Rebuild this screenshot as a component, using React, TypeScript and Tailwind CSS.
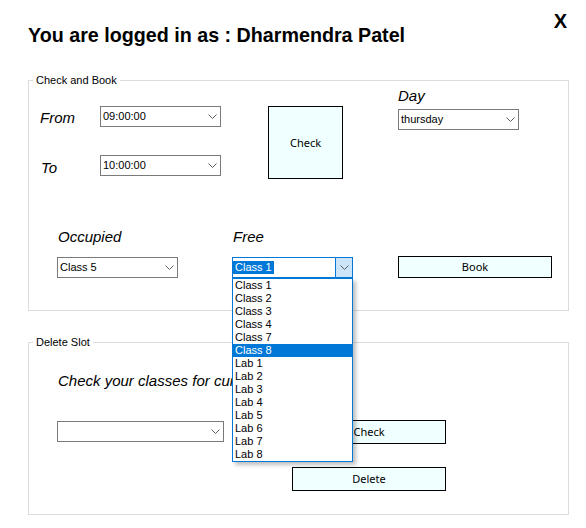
import React from 'react';

const Chevron: React.FC = () => (
  <svg width="9" height="5" viewBox="0 0 9 5" className="shrink-0">
    <polyline points="0.5,0.5 4.5,4.5 8.5,0.5" fill="none" stroke="#5f5f5f" strokeWidth="1" />
  </svg>
);

const Combo: React.FC<{ value?: string; className?: string }> = ({ value = '', className = 'w-[121px]' }) => (
  <div className={`flex h-[21px] items-center justify-between border border-[#7a7a7a] bg-white pl-[2px] pr-[3px] text-[11px] leading-[13px] ${className}`}>
    <span>{value}</span>
    <Chevron />
  </div>
);

const Button: React.FC<{ label: string; className: string }> = ({ label, className }) => (
  <button className={`flex items-center justify-center border border-black bg-[#f0ffff] font-['Noto_Sans',sans-serif] text-[11px] leading-[14px] text-black ${className}`}>
    {label}
  </button>
);

const Label: React.FC<{ text: string; className?: string }> = ({ text, className = '' }) => (
  <div className={`text-[15px] italic leading-[18px] ${className}`}>{text}</div>
);

const rooms = ['Class 1', 'Class 2', 'Class 3', 'Class 4', 'Class 7', 'Class 8', 'Lab 1', 'Lab 2', 'Lab 3', 'Lab 4', 'Lab 5', 'Lab 6', 'Lab 7', 'Lab 8'];

// open dropdown of the "Free" combo, drawn over the Delete Slot group
const FreeCombo: React.FC = () => (
  <div className="relative w-[121px]">
    <div className="flex h-[21px] border border-[#0078d7] bg-white text-[11px] leading-[13px]">
      <div className="flex flex-1 items-center">
        <span className="bg-[#0078d7] px-[2px] text-white">Class 1</span>
      </div>
      <div className="flex w-[17px] items-center justify-center border-l border-[#0078d7] bg-[#cce4f7]">
        <Chevron />
      </div>
    </div>
    <div className="absolute left-0 top-[21px] z-10 w-[121px] border border-[#0078d7] bg-white shadow-[3px_3px_4px_rgba(0,0,0,0.25)]">
      {rooms.map((room) => (
        <div
          key={room}
          className={`h-[13px] pl-[2px] text-[11px] leading-[13px] ${room === 'Class 8' ? 'bg-[#0078d7] text-white' : 'text-black'}`}
        >
          {room}
        </div>
      ))}
    </div>
  </div>
);

const GroupBox: React.FC<{ title: string; className: string; children: React.ReactNode }> = ({ title, className, children }) => (
  <div className={`relative mx-[28px] w-[541px] border border-[#dcdcdc] ${className}`}>
    <span className="absolute left-[4px] top-[-7px] bg-white px-[3px] text-[11px] leading-[13px]">{title}</span>
    {children}
  </div>
);

export default function App() {
  return (
    <div className="h-[528px] w-[586px] overflow-hidden bg-white font-['Liberation_Sans',Arial,sans-serif] text-black">
      <div className="flex justify-between pl-[28px] pr-[19px] pt-[9px]">
        <h1 className="mt-[14px] text-[19.7px] font-bold leading-[24px]">You are logged in as : Dharmendra Patel</h1>
        <span className="text-[20px] font-bold leading-[24px]">X</span>
      </div>

      <GroupBox title="Check and Book" className="mt-[33px] h-[231px]">
        <div className="flex items-start pt-[6px]">
          <div className="ml-[11px] mt-[19px] flex flex-col gap-[28px]">
            <div className="flex items-start">
              <Label text="From" className="mt-[3px] w-[60px]" />
              <Combo value="09:00:00" />
            </div>
            <div className="flex items-start">
              <Label text="To" className="mt-[4px] w-[60px] pl-[1px]" />
              <Combo value="10:00:00" />
            </div>
          </div>
          <Button label="Check" className="ml-[47px] mt-[19px] h-[73px] w-[75px]" />
          <div className="ml-[55px] flex flex-col gap-[4px]">
            <Label text="Day" />
            <Combo value="thursday" />
          </div>
        </div>

        <div className="mt-[49px] flex items-end">
          <div className="ml-[28px] flex flex-col gap-[11px]">
            <Label text="Occupied" className="pl-[1px]" />
            <Combo value="Class 5" />
          </div>
          <div className="ml-[54px] flex flex-col gap-[11px]">
            <Label text="Free" className="pl-[1px]" />
            <FreeCombo />
          </div>
          <Button label="Book" className="ml-[45px] h-[22px] w-[154px]" />
        </div>
      </GroupBox>

      <GroupBox title="Delete Slot" className="mt-[31px] h-[173px]">
        <div className="pl-[28px] pt-[29px]">
          <Label text="Check your classes for current day" className="pl-[1px]" />
          <div className="mt-[30px] flex items-start">
            <Combo className="mt-[1px] w-[167px]" />
            <Button label="Check" className="ml-[68px] h-[24px] w-[154px]" />
          </div>
          <Button label="Delete" className="ml-[235px] mt-[23px] h-[24px] w-[154px]" />
        </div>
      </GroupBox>
    </div>
  );
}
